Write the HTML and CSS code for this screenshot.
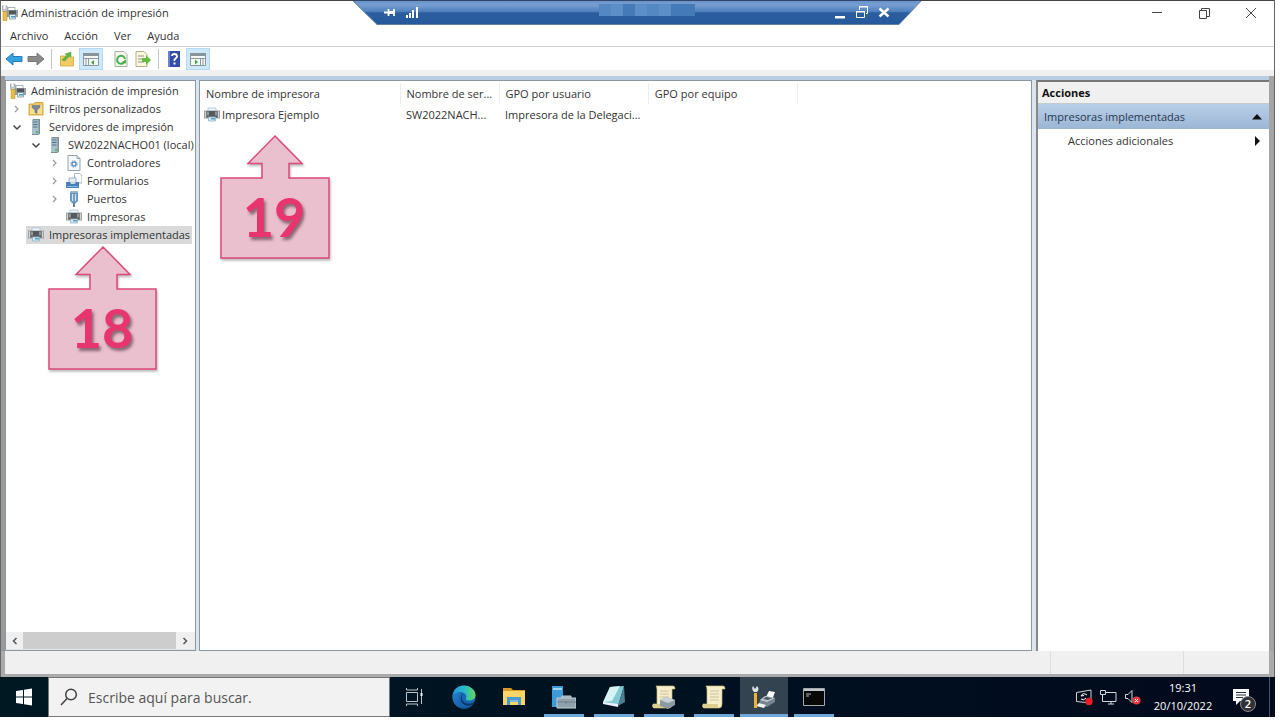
FILE: index.html
```html
<!DOCTYPE html>
<html lang="es">
<head>
<meta charset="utf-8">
<title>Administración de impresión</title>
<link rel="stylesheet" href="styles.css">
</head>
<body>
<svg class="defs" aria-hidden="true">
  <symbol id="printer" viewBox="0 0 16 16">
    <path d="M4 1h8v5H4z" fill="#eef6fb" stroke="#a9c3d2" stroke-width=".8"/>
    <path d="M0 3.500h16v8H0z" fill="#9da2a5"/>
    <path d="M2.500 4h11v6.500h-11z" fill="#54595d"/>
    <path d="M1 4.500h1v6H1zM3.500 4.500h1v4h-1zM11.500 4.500h1v4h-1zM14 4.500h1v6h-1z" fill="#d0d4d6"/>
    <path d="M4.500 10h7v4h-7z" fill="#d3eaf5" stroke="#93b2c1" stroke-width=".8"/>
    <path d="M7 11h4v1.500H7z" fill="#5c9fbd"/>
  </symbol>
  <symbol id="tools" viewBox="0 0 16 16">
    <path d="M6 2.500h7v4H6z" fill="#fff" stroke="#91a3ad" stroke-width=".8"/>
    <path d="M5 5h11v7H5z" fill="#9a9fa3"/>
    <path d="M7 5.500h7v4H7z" fill="#50565b"/>
    <path d="M7.500 9.500h6V14h-6z" fill="#d9eef8" stroke="#7893a1" stroke-width=".8"/>
    <path d="M9 11h4v1.500H9z" fill="#4a99bf"/>
    <path d="M1 .5v3L2.500 5 4 3.500v-3L5.500 2v3L4 7H1.500L0 5V2z" fill="#c9ced1" stroke="#777f84" stroke-width=".5"/>
    <path d="M1 6.500h4v9H1z" fill="#ebbd43" stroke="#b08a29" stroke-width=".5"/>
  </symbol>
  <symbol id="server" viewBox="0 0 16 16">
    <path d="M4 1l1.500-1H12v14.500L10.500 16H4z" fill="#7c8f99"/>
    <path d="M4 1.200h6.500V15H4z" fill="#a9bfcb"/>
    <path d="M5 3h4.500M5 5.500h4.500M5 8h4.500" stroke="#50758a" stroke-width="1"/>
    <path d="M8 12h2v2H8z" fill="#56b85a"/>
  </symbol>
  <symbol id="filter" viewBox="0 0 16 16">
    <path d="M1 3h5l1-1.500h8V14H1z" fill="#f0c75c" stroke="#c99a32" stroke-width=".8"/>
    <path d="M2 4h12v9H2z" fill="#f8df91"/>
    <path d="M4 4.500h8v2L9 9v3.500L7 11.500V9L4 6.500z" fill="#77889a" stroke="#5b6b7a" stroke-width=".5"/>
  </symbol>
  <symbol id="driver" viewBox="0 0 16 16">
    <path d="M2 .5h9L14 3.500v12H2z" fill="#f7fafc" stroke="#94a2ae"/>
    <path d="M11 .5v3h3" fill="none" stroke="#94a2ae"/>
    <circle cx="8" cy="9" r="2" fill="#fff" stroke="#5e93c2" stroke-width="1.500"/>
    <circle cx="8" cy="9" r="3.200" fill="none" stroke="#5e93c2" stroke-dasharray="1.300 1.200"/>
  </symbol>
  <symbol id="forms" viewBox="0 0 16 16">
    <path d="M8.500 .5h5L16 3v7H8.500z" fill="#fff" stroke="#9aa5af" stroke-width=".8"/>
    <path d="M3 5h7v5H3z" fill="#e1eef8" stroke="#8aa3b7" stroke-width=".8"/>
    <path d="M0 9h4l1 2h4l1-2h3v6H0z" fill="#4a80b8"/>
    <path d="M1 13h11v1H1z" fill="#8ab8e1"/>
  </symbol>
  <symbol id="port" viewBox="0 0 16 16">
    <path d="M5 0h6v3H5z" fill="#bfd4e6" stroke="#6284a2" stroke-width=".7"/>
    <path d="M4.500 2h7v8l-2 2h-3l-2-2z" fill="#6f9fcd" stroke="#4c7aa5" stroke-width=".7"/>
    <path d="M6 3h1v7H6zM9 3h1v7H9z" fill="#d4e7f7"/>
    <path d="M8 12v4" stroke="#6d8496" stroke-width="2"/>
  </symbol>
  <symbol id="right" viewBox="0 0 16 16"><path d="M7 5l3 3-3 3" fill="none" stroke="#999" stroke-width="1.200"/></symbol>
  <symbol id="down" viewBox="0 0 16 16"><path d="M5.500 6.500L9 10l3.500-3.500" fill="none" stroke="#444" stroke-width="1.500"/></symbol>
  <symbol id="script" viewBox="0 0 24 24">
    <path d="M4 1h17q2 0 2 3h-3v15q0 4-3 4H2q-2 0-1-4h4V5Q5 2 4 1z" fill="#f5efcb" stroke="#c8b878" stroke-width=".7"/>
    <path d="M1 19h15v4H2q-2 0-1-4z" fill="#ddcf8e"/>
    <path d="M8 6h9M8 9h9M8 12h9M8 15h9" stroke="#cabf9c"/>
  </symbol>
</svg>
<div class="desktop">
  <div class="window">
    <header class="titlebar">
      <svg class="i16"><use href="#tools"/></svg>
      <h1>Administración de impresión</h1>
      <div class="winctl">
        <button aria-label="Minimizar"><svg class="i12" viewBox="0 0 12 12"><path d="M1 5.500h10"/></svg></button>
        <button aria-label="Restaurar"><svg class="i12" viewBox="0 0 12 12"><path d="M1.500 3.500h7v8h-7zM3.500 3V1.500h8v8H9"/></svg></button>
        <button aria-label="Cerrar"><svg class="i12" viewBox="0 0 12 12"><path d="M1 1l10 10M11 1L1 11"/></svg></button>
      </div>
    </header>
    <div class="rdp">
      <svg class="rdp-shape" viewBox="0 0 570 25" preserveAspectRatio="none">
        <defs><linearGradient id="rg" x2="0" y2="1"><stop offset="0" stop-color="#688fc6"/><stop offset=".2" stop-color="#779fd3"/><stop offset=".47" stop-color="#4f7fbd"/><stop offset=".52" stop-color="#2d5e9f"/><stop offset="1" stop-color="#24599c"/></linearGradient></defs>
        <path d="M0 0h570L547 24.500H25z" fill="url(#rg)"/><path d="M0 0L25 24.500H547L570 0" fill="none" stroke="#6480a5"/><path d="M0 .5h570" stroke="#33476b"/>
      </svg>
      <div class="rdp-content">
        <button aria-label="Anclar"><svg class="i16" viewBox="0 0 16 16"><path d="M2 7.500h4M6.500 4v7M7 7.500h6M12 4v7" stroke="#fff" stroke-width="1.800"/><path d="M6 6h6v3H6z" fill="#fff"/></svg></button>
        <button aria-label="Conexión"><svg class="i16" viewBox="0 0 16 16"><path d="M2 10h2v3H2zM5 8h2v5H5zM8 5h2v8H8zM12 2h2v11h-2z" fill="#fff"/></svg></button>
        <div class="mosaic"><i></i><i></i><i></i><i></i><i></i><i></i><i></i><i></i></div>
        <button aria-label="Minimizar conexión"><svg class="i16" viewBox="0 0 16 16"><path d="M3 11h10v2.500H3z" fill="#fff"/></svg></button>
        <button aria-label="Restaurar conexión"><svg class="i16" viewBox="0 0 16 16"><path d="M2.500 6.500h8v6h-8zM2 7h9M5.500 5V1.500h8v7H12M5 2h9" fill="none" stroke="#fff"/></svg></button>
        <button aria-label="Cerrar conexión"><svg class="i16" viewBox="0 0 16 16"><path d="M3.500 3.500l9 8M12.500 3.500l-9 8" stroke="#fff" stroke-width="2.400"/></svg></button>
      </div>
    </div>
    <nav class="menubar"><button>Archivo</button><button>Acción</button><button>Ver</button><button>Ayuda</button></nav>
    <div class="toolbar">
      <button aria-label="Atrás"><svg class="i18" viewBox="0 0 18 18"><path d="M1 9l7-6v3.500h9v5H8V15z" fill="#35a1df" stroke="#267eb9"/></svg></button>
      <button aria-label="Adelante"><svg class="i18" viewBox="0 0 18 18"><path d="M17 9l-7-6v3.500H1v5h9V15z" fill="#8b8b8b" stroke="#777"/></svg></button>
      <span class="sep"></span>
      <button aria-label="Subir"><svg class="i18" viewBox="0 0 18 18"><path d="M2.500 6h6l1 1h6v9h-13z" fill="#f2cb62" stroke="#d9b254"/><path d="M4 10l5-5-2-1 6-2v5l-2-1-4 5z" fill="#62b544" stroke="#4b9d38" stroke-width=".5"/></svg></button>
      <button class="on" aria-label="Mostrar árbol"><svg class="i18" viewBox="0 0 18 18"><path d="M1.500 3.500h15v12h-15z" fill="#f6f8f8" stroke="#89979f"/><path d="M1 3h16v3H1z" fill="#87959c"/><path d="M1 8.500h16M6.500 8v8" stroke="#89979f"/><path d="M3 10h2M3 12h2M3 14h2" stroke="#899"/><path d="M12 10v5l-3-2.500z" fill="#40a936"/></svg></button>
      <button aria-label="Actualizar"><svg class="i18" viewBox="0 0 18 18"><path d="M3 1.500h9l3 3v12H3z" fill="#f6f8ef" stroke="#a6b09a"/><path d="M12 12.500A4 4 0 1 1 13 9" fill="none" stroke="#4caf50" stroke-width="2"/><path d="M9 12.500l5 1v-4z" fill="#4caf50"/></svg></button>
      <button aria-label="Exportar lista"><svg class="i18" viewBox="0 0 18 18"><path d="M2 1.500h8l3 3v12H2z" fill="#fbf8df" stroke="#b5ad84"/><path d="M4 6h6M4 9h5M4 12h6" stroke="#8d9680"/><path d="M8 8h4V5l5 5-5 5v-3H8z" fill="#63bd42"/></svg></button>
      <span class="sep"></span>
      <button aria-label="Ayuda"><svg class="i18" viewBox="0 0 18 18"><path d="M3 1h12v16H3z" fill="#344da9"/><path d="M3 1h2v16H3z" fill="#6b83cf"/><path d="M7 6q0-2 2.500-2T12 6.500q0 1-1.500 2T9.500 11" fill="none" stroke="#fff" stroke-width="1.800"/><path d="M8.500 12.500h2v2h-2z" fill="#fff"/></svg></button>
      <button class="on" aria-label="Mostrar acciones"><svg class="i18" viewBox="0 0 18 18"><path d="M1.500 3.500h15v12h-15z" fill="#f6f8f8" stroke="#89979f"/><path d="M1 3h16v3H1z" fill="#87959c"/><path d="M1 8.500h16M11.500 8v8" stroke="#89979f"/><path d="M13 10h2M13 12h2M13 14h2" stroke="#899"/><path d="M6 9.500v5l3-2.500z" fill="#40a936"/></svg></button>
    </div>
    <main class="panes">
      <section class="pane tree-pane">
        <div class="tree">
          <div class="node"><button class="label"><svg class="i16"><use href="#tools"/></svg>Administración de impresión</button></div>
          <div class="node"><button class="tw" aria-label="Expandir"><svg class="i16"><use href="#right"/></svg></button><button class="label"><svg class="i16"><use href="#filter"/></svg>Filtros personalizados</button></div>
          <div class="node"><button class="tw" aria-label="Contraer"><svg class="i16"><use href="#down"/></svg></button><button class="label"><svg class="i16"><use href="#server"/></svg>Servidores de impresión</button></div>
          <div class="node l2"><button class="tw" aria-label="Contraer"><svg class="i16"><use href="#down"/></svg></button><button class="label"><svg class="i16"><use href="#server"/></svg>SW2022NACHO01 (local)</button></div>
          <div class="node l3"><button class="tw" aria-label="Expandir"><svg class="i16"><use href="#right"/></svg></button><button class="label"><svg class="i16"><use href="#driver"/></svg>Controladores</button></div>
          <div class="node l3"><button class="tw" aria-label="Expandir"><svg class="i16"><use href="#right"/></svg></button><button class="label"><svg class="i16"><use href="#forms"/></svg>Formularios</button></div>
          <div class="node l3"><button class="tw" aria-label="Expandir"><svg class="i16"><use href="#right"/></svg></button><button class="label"><svg class="i16"><use href="#port"/></svg>Puertos</button></div>
          <div class="node l3"><span class="tw"></span><button class="label"><svg class="i16"><use href="#printer"/></svg>Impresoras</button></div>
          <div class="node"><span class="tw"></span><button class="label selected"><svg class="i16"><use href="#printer"/></svg>Impresoras implementadas</button></div>
        </div>
        <div class="hscroll"><button aria-label="Izquierda"><svg class="i8" viewBox="0 0 8 8"><path d="M5.500 1L2.500 4l3 3"/></svg></button><span class="thumb"></span><button aria-label="Derecha"><svg class="i8" viewBox="0 0 8 8"><path d="M2.500 1l3 3-3 3"/></svg></button></div>
        <div class="callout c18"><svg viewBox="0 0 112 126"><path d="M55 2l27 27.500H69V44h39v80H1V44h41V29.500H28z"/></svg><span>18</span></div>
      </section>
      <section class="pane list-pane">
        <table>
          <colgroup><col class="c1"><col class="c2"><col class="c3"><col class="c3"></colgroup>
          <thead><tr><th>Nombre de impresora</th><th>Nombre de ser...</th><th>GPO por usuario</th><th>GPO por equipo</th></tr></thead>
          <tbody><tr><td><span class="cell"><svg class="i16"><use href="#printer"/></svg>Impresora Ejemplo</span></td><td>SW2022NACH...</td><td>Impresora de la Delegaci...</td><td></td></tr></tbody>
        </table>
        <div class="callout c19"><svg viewBox="0 0 112 126"><path d="M55 2l27 27.500H69V44h40v80H1V44h41V29.500H28z"/></svg><span>19</span></div>
      </section>
      <aside class="actions">
        <h2>Acciones</h2>
        <button class="group">Impresoras implementadas<svg class="i12" viewBox="0 0 12 12"><path d="M1 8.500L6 3l5 5.500z"/></svg></button>
        <button class="item">Acciones adicionales<svg class="i12" viewBox="0 0 12 12"><path d="M4 1l5 5-5 5z"/></svg></button>
      </aside>
    </main>
    <footer class="status"><span></span><span></span><span></span></footer>
  </div>
  <div class="taskbar">
    <button class="start" aria-label="Inicio"><svg class="i18" viewBox="0 0 18 18"><path d="M1 3l7-1v6.500H1zM9 1.800L17 .5v8H9zM1 9.500h7V16l-7-1zM9 9.500h8v8l-8-1.300z" fill="#fff"/></svg></button>
    <label class="search"><svg class="i18" viewBox="0 0 18 18"><circle cx="11" cy="6.500" r="5.300"/><path d="M7 10.500L1 17"/></svg><input type="text" placeholder="Escribe aquí para buscar." aria-label="Buscar"></label>
    <div class="apps">
      <button aria-label="Vista de tareas"><svg class="i24" viewBox="0 0 24 24"><path d="M4.500 7.500h11v9h-11zM4.500 3v2h11V3M4.500 21v-2h11v2M19.500 4v15" fill="none" stroke="#bcc4c8"/><path d="M18.500 8h2v3h-2z" fill="#fff"/></svg></button>
      <button aria-label="Edge"><svg class="i24" viewBox="0 0 24 24"><defs><linearGradient id="e1"><stop stop-color="#2496dc"/><stop offset=".5" stop-color="#27b8ca"/><stop offset="1" stop-color="#65d55e"/></linearGradient><linearGradient id="e2" y2="1"><stop stop-color="#247fcd"/><stop offset="1" stop-color="#124e91"/></linearGradient></defs><circle cx="12" cy="12" r="11.500" fill="#1768b2"/><path d="M.5 12C1 4 6 .5 12 .5S24 5 23.500 10.500c-.3 4.500-5.500 6-9 4.500-1.500-1-.2-1.800-.2-3.500 0-2.500-2.500-4.300-5.300-4.300C5 7 1 9 .5 12z" fill="url(#e1)"/><path d="M9 9c-3 2-3 9 2 11.500 4 2 8 .5 10.500-2.500-3 5-8 6.500-13 5C1 21 0 13 1 10.500 3 7.500 7 7 9 9z" fill="url(#e2)"/><path d="M11.500 9c-3 2-2 8 2.500 9.200 3 .8 6 .3 8.300-1l-1 1.800c-4 3-10 2-11.800-2C8 14 9 10 11.500 9z" fill="#0b3469"/></svg></button>
      <button aria-label="Explorador"><svg class="i24" viewBox="0 0 24 24"><path d="M1 3h8l2 2h12v4H1z" fill="#d99b24"/><path d="M1 6h22v14H1z" fill="#fbd466"/><path d="M5 12h14v8h-3v-3H8v3H5z" fill="#4b9bd1"/><path d="M8 15h8v2H8z" fill="#7bbce1"/></svg></button>
      <button class="run" aria-label="Administrador del servidor"><svg class="i24" viewBox="0 0 24 24"><path d="M0 1h11v21H0z" fill="#3c9ad8"/><path d="M1 3h9v2H1z" fill="#9fd4f2"/><path d="M10 13v-2h9v2M5 13h19v10H5z" fill="#8fa1ad" stroke="#c5d0d6"/><path d="M5 17h19M14 16v3" stroke="#6c7d88"/></svg></button>
      <button class="run" aria-label="Bloc de notas"><svg class="i24" viewBox="0 0 24 24"><path d="M8 2l14-1-6 20-15-3z" fill="#82c9d4"/><path d="M8 2l10-1-8 15-9 1z" fill="#d7f3f4"/><path d="M22 1l1 16-7 4z" fill="#4d7f91"/><path d="M1 17l15 2v3L1 19z" fill="#eef"/></svg></button>
      <button class="run" aria-label="Registro"><svg class="i24" viewBox="0 0 24 24"><use href="#script"/><path d="M8 15l6-3 9 3v5l-7 4-8-3z" fill="#8c9ba3"/><path d="M8 15l6-3 9 3-7 3z" fill="#c7d0d4"/></svg></button>
      <button class="run" aria-label="Documento"><svg class="i24"><use href="#script"/></svg></button>
      <button class="run active" aria-label="Administración de impresión"><svg class="i24" viewBox="0 0 24 24"><path d="M14 12l3-6 6 1-3 8z" fill="#fff"/><path d="M8 15l5-4 10 2v4l-8 5-8-3z" fill="#78848e"/><path d="M8 15l5-4 10 2-8 4z" fill="#bcc6ce"/><path d="M11 14l3-2 6 1-4 2z" fill="#4d5860"/><path d="M7 18l7 2-2 3-8-2z" fill="#eef5f8"/><path d="M1 1l2 3 2-3q3 3 0 6H2Q-1 4 1 1z" fill="#dde2e5"/><path d="M2 8h3v15H2z" fill="#edb331"/></svg></button>
      <button class="run" aria-label="Símbolo del sistema"><svg class="i24" viewBox="0 0 24 24"><path d="M1.500 3.500h21v17h-21z" fill="#080808" stroke="#a4a8aa"/><path d="M2 4h20v2H2z" fill="#c2c4c5"/><path d="M4 9h5M4 11h3" stroke="#bbb"/></svg></button>
    </div>
    <div class="tray">
      <button aria-label="Actualización"><svg class="i18" viewBox="0 0 18 18"><path d="M1.500 4.500L16 2v13l-14.500-1.500z" fill="none" stroke="#d0d3d6"/><path d="M12 7q-4-3-6 1l3-.5M6 11q3 2 5-1" fill="none" stroke="#fff"/><circle cx="14" cy="13.500" r="3.700" fill="#ed1c24"/></svg></button>
      <button aria-label="Red"><svg class="i18" viewBox="0 0 18 18"><path d="M6 4.500h11v9H3.500V8M9 16h6M12 13v3M1.500 2.500h5v4h-5zM3.500 7v3" fill="none" stroke="#d4d7da"/></svg></button>
      <button aria-label="Volumen"><svg class="i18" viewBox="0 0 18 18"><path d="M2.500 6.500H5L9 2.500v12l-4-4H2.500z" fill="none" stroke="#d4d7da"/><circle cx="13.500" cy="12.500" r="4" fill="#e83b43"/><path d="M12 11l3 3M15 11l-3 3" stroke="#fff"/></svg></button>
      <button class="clock"><time>19:31</time><span>20/10/2022</span></button>
      <button class="notice" aria-label="Notificaciones"><svg class="i18" viewBox="0 0 18 18"><path d="M1 1h16v12H8l-4 4v-4H1z" fill="#fff"/><path d="M4 4.500h10M4 7h10M4 9.500h7" stroke="#28313b"/></svg><span class="badge">2</span></button>
    </div>
  </div>
</div>
</body>
</html>
```
FILE: styles.css
```css
* { box-sizing: border-box; }
body { margin: 0; background: #fff; color: #333; font: 11px/18px "Open Sans", "Noto Sans", sans-serif; }
button { margin: 0; padding: 0; border: 0; background: none; color: inherit; font: inherit; display: flex; align-items: center; justify-content: center; }
svg { display: block; flex: none; }
.defs { display: none; }
.i8 { width: 8px; height: 8px; }
.i12 { width: 12px; height: 12px; }
.i16 { width: 16px; height: 16px; }
.i18 { width: 18px; height: 18px; }
.i24 { width: 24px; height: 24px; }
.desktop { display: flex; flex-direction: column; height: 100vh; padding: 0 5px 6px 0; }
.window { position: relative; flex: 1; min-height: 0; display: flex; flex-direction: column; border-top: 1px solid #444; border-left: 1px solid #666; border-right: 1px solid #666; }
.titlebar { display: flex; align-items: center; height: 24px; padding-left: 1px; gap: 3px; }
h1 { margin: 0; font-size: 11px; font-weight: 400; }
.winctl { display: flex; margin-left: auto; height: 22px; }
.winctl button { width: 47px; }
.winctl path { fill: none; stroke: #444; }
.rdp { position: absolute; top: -1px; left: 351px; width: 570px; height: 25px; }
.rdp-shape { position: absolute; width: 100%; height: 100%; }
.rdp-content { position: relative; display: flex; align-items: center; height: 25px; padding: 0 30px; gap: 6px; }
.mosaic { display: flex; flex: none; margin: 0 auto; align-self: flex-start; padding-top: 4px; padding-left: 42px; }
.mosaic i { width: 12px; height: 12px; background: #5488c2; }
.mosaic i:nth-child(even) { background: #5c8fc7; }
.mosaic i:nth-child(3), .mosaic i:nth-child(n+7) { background: #447ab7; }
.menubar { display: flex; height: 22px; padding-left: 9px; gap: 16px; border-bottom: 1px solid #ccd0d2; }
.toolbar { display: flex; align-items: center; height: 29px; padding: 0 2px; border-bottom: 6px solid #f0f0f0; }
.toolbar button { width: 22px; height: 22px; }
.toolbar .on { width: 24px; background: #cce8fa; border: 1px solid #b4d9f2; margin: 0 7px 0 1px; }
.sep { width: 1px; height: 20px; margin: 0 4px; background: #c4c4c4; }
.panes { display: flex; flex: 1; min-height: 0; gap: 3px; padding-top: 4px; background: #dce4ee; border-left: 4px solid #999; border-right: 5px solid #a5a5a5; box-shadow: inset 0 4px #b9cee3; }
.pane { position: relative; background: #fff; border: 1px solid #8b97a3; }
.tree-pane { width: 191px; flex: none; display: flex; flex-direction: column; justify-content: space-between; }
.tree { padding-top: 1px; overflow: hidden; }
.node { display: flex; height: 18px; padding-left: 2px; white-space: nowrap; }
.l2 { padding-left: 21px; }
.l3 { padding-left: 40px; }
.tw { width: 16px; flex: none; margin-right: 2px; }
.label { gap: 5px; padding: 0 2px; }
.selected { background: #d9d9d9; }
.hscroll { display: flex; height: 18px; padding-right: 2px; background: #f0f0f0; border-bottom: 1px solid #e4e4e4; }
.hscroll button { width: 17px; }
.hscroll path { fill: none; stroke: #555; stroke-width: 1.5; }
.thumb { flex: 1; background: #cdcdcd; }
.list-pane { flex: 1; min-width: 0; }
table { width: 598px; table-layout: fixed; border-collapse: collapse; margin-top: 2px; }
.c1 { width: 200px; }
.c2 { width: 99px; }
th, td { padding: 0 5px 0 6px; height: 21px; text-align: left; font-weight: 400; white-space: nowrap; overflow: hidden; }
th { border-right: 1px solid #eee; }
.cell { display: flex; align-items: center; gap: 2px; margin-left: -2px; }
.actions { flex: none; width: 233px; margin-left: 1px; background: #fff; border-left: 2px solid #888; border-top: 2px solid #777; }
h2 { margin: 0; padding-left: 4px; height: 22px; font-size: 11px; line-height: 22px; color: #111; background: #f0f0f0; border-bottom: 1px solid #c4c9cd; }
.actions button { width: 100%; height: 24px; justify-content: space-between; padding: 0 6px; }
.actions .group { height: 25px; background: linear-gradient(#b9cfe8, #9bb5d5); color: #26384f; }
.actions .item { padding-left: 30px; }
.actions path { fill: #111; }
.status { display: flex; height: 26px; background: #f0f0f0; border-bottom: 3px solid #aaa; border-left: 4px solid #aaa; border-right: 5px solid #aaa; }
.status span { border-right: 1px solid #ddd; width: 133px; }
.status span:first-child { flex: 1; }
.status span:last-child { width: 85px; border: 0; }
.callout { position: absolute; width: 112px; height: 126px; color: #e9356f; font: 700 54px/80px Lato, "Open Sans", sans-serif; text-align: center; }
.callout svg { position: absolute; width: 112px; height: 126px; filter: drop-shadow(1px 2px 1px #bbb); }
.callout path { fill: #eabfce; stroke: #dc497d; stroke-width: 1.5; }
.callout span { position: relative; display: block; padding-top: 43px; padding-right: 4px; text-shadow: 2px 3px 3px #8a6875; }
.c18 { left: 42px; top: 164px; }
.c19 { left: 20px; top: 53px; }
.taskbar { display: flex; flex: none; height: 40px; background: linear-gradient(90deg, #001822, #001020 60%, #020a1c); color: #fff; }
.start { width: 48px; }
.search { display: flex; align-items: center; width: 342px; flex: none; padding: 0 11px; gap: 10px; background: #f2f2f2; border: 1px solid #777; }
.search svg { fill: none; stroke: #444; stroke-width: 1.5; }
.search input { flex: 1; min-width: 0; padding: 2px 0 0; border: 0; outline: 0; background: none; color: #333; font: 14px/20px "Open Sans", "Noto Sans", sans-serif; }
.search input::placeholder { color: #555; opacity: 1; }
.apps { display: flex; gap: 2px; }
.apps button { position: relative; width: 48px; }
.run::after { content: ""; position: absolute; left: 4px; right: 4px; bottom: 0; height: 3px; background: #6fa8d8; }
.active { background: #33434f; }
.active::after { left: 0; right: 0; }
.tray { display: flex; margin-left: auto; margin-right: 5px; border-right: 1px solid #4b5260; }
.tray button { width: 24px; }
.tray .clock { flex-direction: column; width: 78px; line-height: 18px; }
.tray .notice { position: relative; width: 47px; justify-content: flex-start; padding-left: 10px; }
.badge { position: absolute; left: 18px; top: 19px; width: 16px; height: 16px; border-radius: 8px; border: 1px solid #888; background: #303238; line-height: 14px; font-weight: 600; }
```
